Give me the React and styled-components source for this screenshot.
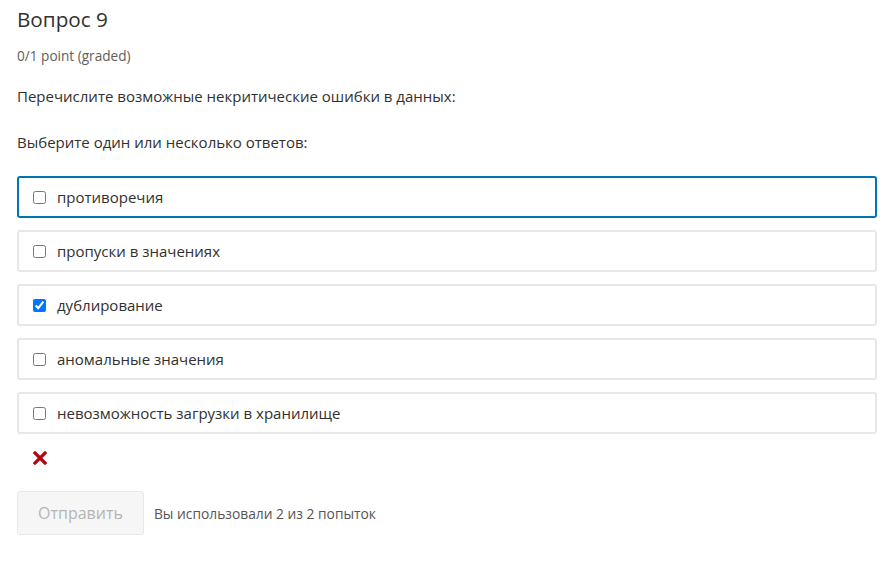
import styled, {createGlobalStyle} from 'styled-components';

const GlobalStyle = createGlobalStyle`
	body {
		margin: 0;
		background: #fff;
		font-family: "Open Sans", "Noto Sans", sans-serif;
		color: #313131;
	}
`;

const Problem = styled.div`
	padding: 0 12px 0 17px;
`;

const Title = styled.h3`
	margin: 0;
	padding-top: 5px;
	font-size: 20.7px;
	font-weight: 400;
	line-height: 28px;
	color: #313131;
`;

const Points = styled.div`
	margin-top: 15px;
	font-size: 13.6px;
	line-height: 16px;
	color: #5e5e5e;
`;

const Prompt = styled.p`
	margin: ${props => props.top}px 0 0;
	font-size: 15px;
	line-height: 20px;
	color: #313131;
`;

const Options = styled.div`
	display: flex;
	flex-direction: column;
	gap: 12px;
	margin-top: 24px;
`;

const Option = styled.label`
	display: flex;
	align-items: center;
	gap: 11px;
	height: 42px;
	box-sizing: border-box;
	padding: 0 14px;
	border: 2px solid ${props => (props.focused ? '#0075b4' : '#e7e7e7')};
	border-radius: 3px;
	font-size: 15px;
	color: #313131;
	cursor: pointer;
`;

const Box = styled.input`
	width: 13px;
	height: 13px;
	margin: 0;
`;

const Status = styled.div`
	padding: 14px 0 0 16px;
	height: 30px;
`;

const Actions = styled.div`
	display: flex;
	align-items: center;
	gap: 10px;
	margin-top: 13px;
`;

const SubmitButton = styled.button`
	height: 44px;
	padding: 0 20px;
	border: 1px solid #e8e8e8;
	border-radius: 3px;
	background: #f6f6f6;
	font-family: inherit;
	font-size: 16px;
	color: #b5b5b5;
`;

const Attempts = styled.span`
	font-size: 13.8px;
	color: #555;
`;

const options = [
	{label: 'противоречия', focused: true},
	{label: 'пропуски в значениях'},
	{label: 'дублирование', checked: true},
	{label: 'аномальные значения'},
	{label: 'невозможность загрузки в хранилище'}
];

const App = () => {
	return (
		<Problem>
			<GlobalStyle />
			<Title>Вопрос 9</Title>
			<Points>0/1 point (graded)</Points>
			<Prompt top={22}>Перечислите возможные некритические ошибки в данных:</Prompt>
			<Prompt top={26}>Выберите один или несколько ответов:</Prompt>
			<Options>
				{options.map(opt => (
					<Option key={opt.label} focused={opt.focused}>
						<Box type="checkbox" defaultChecked={opt.checked} />
						{opt.label}
					</Option>
				))}
			</Options>
			<Status>
				<svg width="14" height="14" viewBox="0 0 14 14">
					<path d="M2 2 L12 12 M12 2 L2 12" stroke="#b20610" strokeWidth="3.2" strokeLinecap="square" />
				</svg>
			</Status>
			<Actions>
				<SubmitButton disabled>Отправить</SubmitButton>
				<Attempts>Вы использовали 2 из 2 попыток</Attempts>
			</Actions>
		</Problem>
	);
};

export default App;
